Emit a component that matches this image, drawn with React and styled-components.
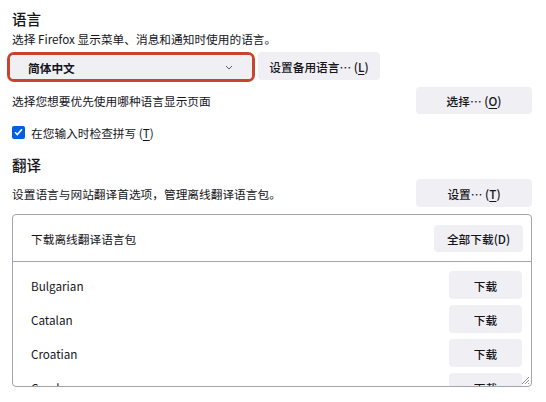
import React from "react";
import styled, { createGlobalStyle } from "styled-components";

const GlobalStyle = createGlobalStyle`
    body {
        margin: 0;
        background: #ffffff;
        color: #15141a;
        font-family: "Noto Sans CJK SC", "Noto Sans", sans-serif;
        font-size: 11.7px;
    }
`;

const Page = styled.div`
    width: 546px;
    height: 402px;
    box-sizing: border-box;
    padding: 9px 14px 0 12px;
    overflow: hidden;
`;

const Heading = styled.h2`
    margin: ${(p) => p.$top || 0}px 0 0;
    font-size: 14.5px;
    line-height: 20px;
    font-weight: 500;
`;

const Subtitle = styled.div`
    margin-top: 1px;
    line-height: 18px;
`;

const Row = styled.div`
    display: flex;
    align-items: ${(p) => p.$align || "center"};
    justify-content: ${(p) => p.$justify || "flex-start"};
    margin-top: ${(p) => p.$top || 0}px;
`;

const Highlight = styled.div`
    margin-left: -5px;
    border: 3px solid #c9432e;
    border-radius: 7px;
`;

const Select = styled.div`
    width: 242px;
    height: 24px;
    box-sizing: border-box;
    display: flex;
    align-items: center;
    justify-content: space-between;
    padding: 0 18px;
    background: #f0f0f4;
    border-radius: 4px;
    font-weight: 700;
    .chevron {
        margin-right: 1px;
    }
`;

const Button = styled.button`
    width: ${(p) => (p.$w ? `${p.$w}px` : "auto")};
    height: ${(p) => p.$h || 28}px;
    margin-left: ${(p) => p.$ml || 0}px;
    padding: 0 10px;
    border: none;
    border-radius: 4px;
    background: #f0f0f4;
    color: #15141a;
    font-family: inherit;
    font-size: 11.7px;
    font-weight: 500;
    white-space: nowrap;
    flex-shrink: 0;
    u {
        text-decoration-thickness: 1px;
        text-underline-offset: 2px;
    }
`;

const CheckRow = styled.label`
    display: flex;
    align-items: center;
    gap: 6px;
    height: 20px;
    margin-top: 8px;
    u {
        text-underline-offset: 2px;
    }
`;

const CheckBox = styled.span`
    width: 13px;
    height: 13px;
    border-radius: 2px;
    background: #0061e0;
    display: flex;
    align-items: center;
    justify-content: center;
`;

const Panel = styled.div`
    position: relative;
    margin-top: 7px;
    height: 173px;
    box-sizing: border-box;
    border: 1px solid #a3a3ab;
    border-radius: 4px;
    overflow: hidden;
`;

const PanelHeader = styled.div`
    height: 46px;
    display: flex;
    align-items: center;
    justify-content: space-between;
    padding: 0 8px 0 18px;
    border-bottom: 1px solid #a3a3ab;
`;

const List = styled.div`
    padding-top: 6px;
`;

const LangRow = styled.div`
    height: 34px;
    display: flex;
    align-items: center;
    justify-content: space-between;
    padding: 0 9px 0 18px;
`;

const Grip = styled.svg`
    position: absolute;
    right: 1px;
    bottom: 1px;
`;

const languages = ["Bulgarian", "Catalan", "Croatian", "Czech"];

const App = () => {
    return (
        <Page>
            <GlobalStyle />
            <Heading>语言</Heading>
            <Subtitle>选择 Firefox 显示菜单、消息和通知时使用的语言。</Subtitle>
            <Row $align="flex-start" $top={4}>
                <Highlight>
                    <Select>
                        <span>简体中文</span>
                        <svg className="chevron" width="8" height="5" viewBox="0 0 8 5">
                            <path d="M1 1l3 3 3-3" fill="none" stroke="#5b5b66" strokeWidth="1" />
                        </svg>
                    </Select>
                </Highlight>
                <Button $ml={3} $w={122}>设置备用语言… (<u>L</u>)</Button>
            </Row>
            <Row $justify="space-between" $top={5}>
                <span>选择您想要优先使用哪种语言显示页面</span>
                <Button $w={116} $h={27}>选择… (<u>O</u>)</Button>
            </Row>
            <CheckRow>
                <CheckBox>
                    <svg width="9" height="8" viewBox="0 0 9 8">
                        <path d="M1 4.2l2.3 2.3L8 1.3" fill="none" stroke="#fff" strokeWidth="1.6" />
                    </svg>
                </CheckBox>
                <span>在您输入时检查拼写 (<u>T</u>)</span>
            </CheckRow>
            <Heading $top={13}>翻译</Heading>
            <Row $justify="space-between" $top={4}>
                <span>设置语言与网站翻译首选项，管理离线翻译语言包。</span>
                <Button $w={116}>设置… (<u>T</u>)</Button>
            </Row>
            <Panel>
                <PanelHeader>
                    <span>下载离线翻译语言包</span>
                    <Button $w={89} $h={27}>全部下载(D)</Button>
                </PanelHeader>
                <List>
                    {languages.map((name) => (
                        <LangRow key={name}>
                            <span>{name}</span>
                            <Button $w={73}>下载</Button>
                        </LangRow>
                    ))}
                </List>
                <Grip width="9" height="9" viewBox="0 0 9 9">
                    <path d="M8 1L1 8M8 4L4 8M8 7L7 8" stroke="#8f8f9d" strokeWidth="1" />
                </Grip>
            </Panel>
        </Page>
    );
};

export default App;
